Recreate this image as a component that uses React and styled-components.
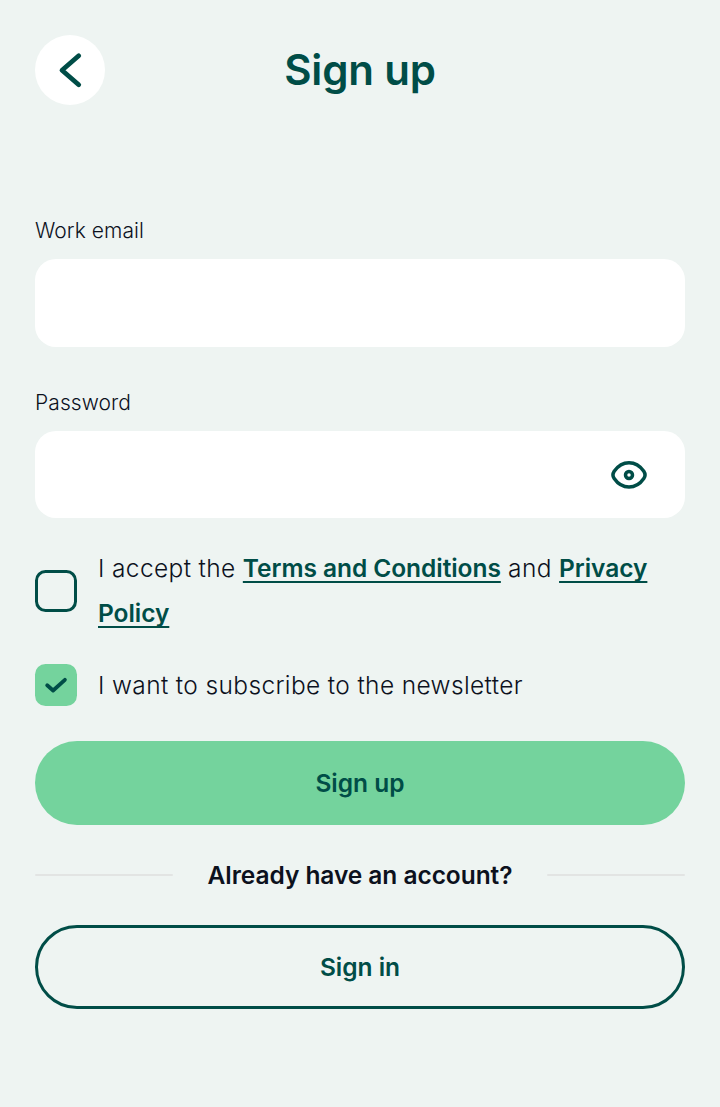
import React from 'react';
import styled, { createGlobalStyle, css } from 'styled-components';

const Global = createGlobalStyle`
  * { box-sizing: border-box; }
  body {
    margin: 0;
    background: #eef4f2;
    color: #0c111d;
    font-family: Inter, "Liberation Sans", sans-serif;
  }
  button { font-family: inherit; cursor: pointer; }
`;

const Page = styled.main`
  min-height: 1107px;
  padding: 35px 35px 0;
  display: flex;
  flex-direction: column;
`;

const Header = styled.header`
  display: grid;
  grid-template-columns: 70px 1fr 70px;
  align-items: center;
  height: 70px;
  margin-bottom: 112px;
`;

const BackButton = styled.button`
  width: 70px;
  height: 70px;
  padding: 0;
  border: 0;
  border-radius: 50%;
  background: #fff;
  display: grid;
  place-items: center;
`;

const Title = styled.h1`
  margin: 0;
  text-align: center;
  font-size: 42px;
  line-height: 50px;
  font-weight: 600;
  letter-spacing: -0.15px;
  color: #004d47;
`;

const Field = styled.div`
  display: flex;
  flex-direction: column;
  margin-bottom: ${(p) => p.$gap}px;
`;

const Label = styled.label`
  padding-top: 0.4px;
  margin-bottom: 13.9px;
  font-size: 21px;
  line-height: 28px;
  letter-spacing: 0.08px;
  font-weight: 340;
`;

const InputBox = styled.div`
  display: flex;
  align-items: center;
  height: 87.4px;
  padding: 0 37px 0 28px;
  border-radius: 21px;
  background: #fff;
`;

const Input = styled.input`
  flex: 1;
  min-width: 0;
  border: 0;
  outline: 0;
  background: transparent;
  font: 300 24px Inter, sans-serif;
`;

const IconButton = styled.button`
  display: flex;
  padding: 0;
  border: 0;
  background: none;
`;

const CheckRow = styled.div`
  display: flex;
  align-items: center;
  gap: 21px;
  margin-bottom: ${(p) => p.$gap}px;
`;

const Checkbox = styled.span`
  flex: none;
  width: 42px;
  height: 42px;
  border-radius: 10.5px;
  display: grid;
  place-items: center;
  ${(p) => p.$checked
    ? css`background: #74d39d;`
    : css`border: 3px solid #004d47;`}
`;

const CheckText = styled.span`
  font-size: 24.5px;
  line-height: 44.5px;
  letter-spacing: 0.36px;
  font-weight: 340;
`;

const Link = styled.a`
  color: #004d47;
  font-weight: 600;
  letter-spacing: -0.05px;
  text-decoration: underline;
  text-decoration-thickness: 2px;
  text-underline-offset: 4px;
  text-decoration-skip-ink: none;
`;

const Button = styled.button`
  height: 84px;
  width: 100%;
  border-radius: 42px;
  border: ${(p) => (p.$outline ? '3px solid #004d47' : '0')};
  background: ${(p) => (p.$outline ? 'transparent' : '#74d39d')};
  color: #004d47;
  font-size: 24.5px;
  font-weight: 600;
`;

const Divider = styled.div`
  display: flex;
  align-items: center;
  gap: 35px;
  height: 100px;
  font-size: 24.5px;
  font-weight: 600;
  letter-spacing: -0.06px;
  white-space: nowrap;
  &::before, &::after {
    content: "";
    flex: 1;
    height: 2px;
    border-radius: 1px;
    background: #e2e4e3;
  }
`;

export default function App() {
  return (
    <>
      <Global />
      <Page>
        <Header>
          <BackButton aria-label="Back">
            <svg width="70" height="70" fill="none" stroke="#004d47" strokeWidth="4.8">
              <path d="M43.7 20.7 27 35.2 43.7 49.7" strokeLinecap="round" strokeLinejoin="round" />
            </svg>
          </BackButton>
          <Title>Sign up</Title>
        </Header>
        <Field $gap={42}>
          <Label htmlFor="email">Work email</Label>
          <InputBox><Input id="email" type="email" /></InputBox>
        </Field>
        <Field $gap={28.1}>
          <Label htmlFor="password">Password</Label>
          <InputBox>
            <Input id="password" type="password" />
            <IconButton aria-label="Show password">
              <svg width="38" height="32" viewBox="0 0 38 32" fill="none" stroke="#004d47" strokeWidth="3.5">
                <path d="M19 3.7C25.5 3.7 30.3 7.2 33.8 12.2Q36.3 16 33.8 19.6C30.3 24.7 25.5 28.1 19 28.1S7.7 24.7 4.2 19.6Q1.7 16 4.2 12.2C7.7 7.2 12.5 3.7 19 3.7Z" />
                <circle cx="19" cy="16" r="3.5" />
              </svg>
            </IconButton>
          </InputBox>
        </Field>
        <CheckRow $gap={27.4}>
          <Checkbox role="checkbox" aria-checked="false" />
          <CheckText>I accept the <Link>Terms and Conditions</Link> and <Link>Privacy Policy</Link></CheckText>
        </CheckRow>
        <CheckRow $gap={33.7}>
          <Checkbox $checked role="checkbox" aria-checked="true">
            <svg width="42" height="42" fill="none" stroke="#004d47" strokeWidth="3.8">
              <path d="m12.2 21.3 5.9 5.2 11.8-10.7" strokeLinecap="round" strokeLinejoin="round" />
            </svg>
          </Checkbox>
          <CheckText>I want to subscribe to the newsletter</CheckText>
        </CheckRow>
        <Button>Sign up</Button>
        <Divider>Already have an account?</Divider>
        <Button $outline>Sign in</Button>
      </Page>
    </>
  );
}
